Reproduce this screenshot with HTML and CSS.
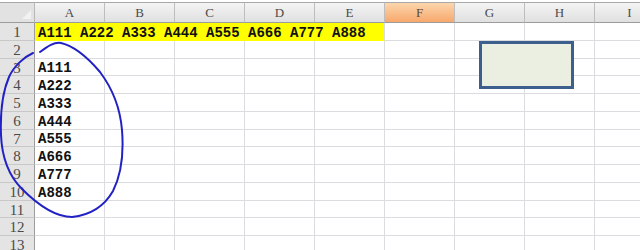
FILE: index.html
```html
<!DOCTYPE html>
<html>
<head>
<meta charset="utf-8">
<link rel="stylesheet" href="styles.css">
</head>
<body>
<div class="sheet">
  <div class="corner"></div>
  <div class="ch">A</div><div class="ch">B</div><div class="ch">C</div><div class="ch">D</div><div class="ch">E</div><div class="ch sel">F</div><div class="ch">G</div><div class="ch">H</div><div class="ch">I</div>

  <div class="rh">1</div><div class="c yel">A111 A222 A333 A444 A555 A666 A777 A888</div><div class="c"></div><div class="c"></div><div class="c"></div><div class="c"></div>
  <div class="rh">2</div><div class="c"></div><div class="c"></div><div class="c"></div><div class="c"></div><div class="c"></div><div class="c"></div><div class="c"></div><div class="c"></div><div class="c"></div>
  <div class="rh">3</div><div class="c">A111</div><div class="c"></div><div class="c"></div><div class="c"></div><div class="c"></div><div class="c"></div><div class="c"></div><div class="c"></div><div class="c"></div>
  <div class="rh">4</div><div class="c">A222</div><div class="c"></div><div class="c"></div><div class="c"></div><div class="c"></div><div class="c"></div><div class="c"></div><div class="c"></div><div class="c"></div>
  <div class="rh">5</div><div class="c">A333</div><div class="c"></div><div class="c"></div><div class="c"></div><div class="c"></div><div class="c"></div><div class="c"></div><div class="c"></div><div class="c"></div>
  <div class="rh">6</div><div class="c">A444</div><div class="c"></div><div class="c"></div><div class="c"></div><div class="c"></div><div class="c"></div><div class="c"></div><div class="c"></div><div class="c"></div>
  <div class="rh">7</div><div class="c">A555</div><div class="c"></div><div class="c"></div><div class="c"></div><div class="c"></div><div class="c"></div><div class="c"></div><div class="c"></div><div class="c"></div>
  <div class="rh">8</div><div class="c">A666</div><div class="c"></div><div class="c"></div><div class="c"></div><div class="c"></div><div class="c"></div><div class="c"></div><div class="c"></div><div class="c"></div>
  <div class="rh">9</div><div class="c">A777</div><div class="c"></div><div class="c"></div><div class="c"></div><div class="c"></div><div class="c"></div><div class="c"></div><div class="c"></div><div class="c"></div>
  <div class="rh">10</div><div class="c">A888</div><div class="c"></div><div class="c"></div><div class="c"></div><div class="c"></div><div class="c"></div><div class="c"></div><div class="c"></div><div class="c"></div>
  <div class="rh">11</div><div class="c"></div><div class="c"></div><div class="c"></div><div class="c"></div><div class="c"></div><div class="c"></div><div class="c"></div><div class="c"></div><div class="c"></div>
  <div class="rh">12</div><div class="c"></div><div class="c"></div><div class="c"></div><div class="c"></div><div class="c"></div><div class="c"></div><div class="c"></div><div class="c"></div><div class="c"></div>
  <div class="rh">13</div><div class="c"></div><div class="c"></div><div class="c"></div><div class="c"></div><div class="c"></div><div class="c"></div><div class="c"></div><div class="c"></div><div class="c"></div>
</div>

<div class="shape"></div>

<svg class="ink" width="640" height="250" viewBox="0 0 640 250">
  <path d="M40,52 C48,46 54,42 61,43 C74,46 89,59 100,72 C112,88 120,106 122,130 C124,155 121,175 113,191 C105,205 91,215 72,217 C55,217 38,205 22,189 C9,176 2,160 1,135 C0,110 3,91 9,77 C14,66 24,57 33,53" fill="none" stroke="#2222c4" stroke-width="2" stroke-linecap="round"/>
</svg>
</body>
</html>
```

FILE: styles.css
```css
* { box-sizing: border-box; }

body {
  margin: 0;
  width: 640px;
  height: 250px;
  overflow: hidden;
  background: #ffffff;
  position: relative;
  font-family: "Liberation Serif", serif;
}

.sheet {
  display: grid;
  grid-template-columns: 35px repeat(9, 70px);
  grid-template-rows: 21px repeat(13, 17.75px);
  margin-top: 2px;
  width: 665px;
}

.corner {
  position: relative;
  background: #e2e2e2;
  border-top: 1px solid #a8a8a8;
  border-bottom: 1px solid #9c9c9c;
  border-right: 1px solid #b8b8b8;
}

.corner::after {
  content: "";
  position: absolute;
  right: 3px;
  bottom: 3px;
  border-left: 9px solid transparent;
  border-bottom: 9px solid #f2f2f2;
}

.ch {
  background: linear-gradient(#f4f4f4, #e0e0e0);
  border-top: 1px solid #a8a8a8;
  border-bottom: 1px solid #9c9c9c;
  border-right: 1px solid #bdbdbd;
  text-align: center;
  font-size: 13px;
  line-height: 19px;
  color: #4a4a4a;
}

.ch.sel {
  background: linear-gradient(#fcd6ad, #f7a86c);
  color: #5a4a3a;
}

.rh {
  background: #e4e4e4;
  border-right: 1px solid #9c9c9c;
  border-bottom: 1px solid #c8c8c8;
  text-align: center;
  font-size: 15px;
  line-height: 18px;
  color: #4a4a4a;
}

.c {
  display: flex;
  align-items: flex-end;
  padding-left: 3px;
  border-right: 1px solid #dadcdf;
  border-bottom: 1px solid #dadcdf;
  font-family: "Liberation Mono", monospace;
  font-weight: bold;
  font-size: 14px;
  line-height: 14px;
  color: #111;
  white-space: nowrap;
}

.yel {
  grid-column: span 5;
  background: #ffff00;
  border-right: 1px solid #dadcdf;
  border-bottom-color: #ffff00;
}

.shape {
  position: absolute;
  left: 479px;
  top: 41px;
  width: 95px;
  height: 48px;
  background: #ebefe1;
  border: 3px solid #3d5f8d;
}

.ink {
  position: absolute;
  left: 0;
  top: 0;
  pointer-events: none;
}
```
